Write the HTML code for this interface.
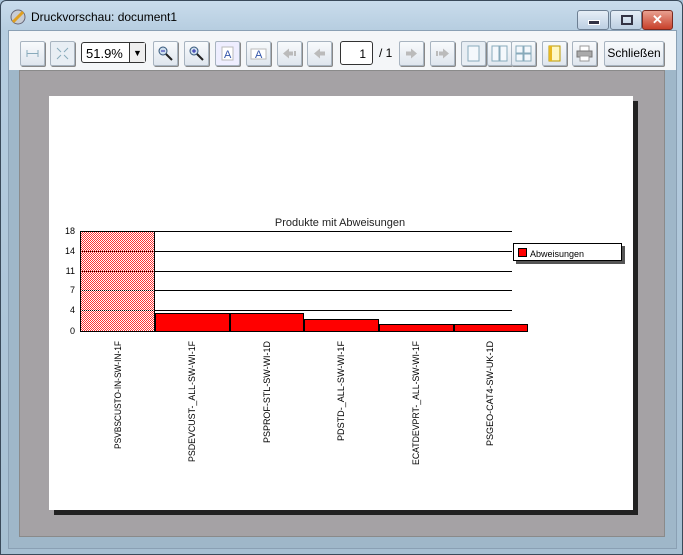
<!DOCTYPE html>
<html><head><style>
body{margin:0;width:683px;height:555px;overflow:hidden;font-family:"Liberation Sans",sans-serif;background:#a9c3d8;position:relative}
.frame{position:absolute;left:0;top:0;width:681px;height:553px;border:1px solid #3a4a5a;border-radius:6px 6px 0 0;background:linear-gradient(#c9dcec,#b6cde0 30px,#a6bfd2);}
.title{position:absolute;left:31px;top:10px;font-size:12px;color:#000}
.client{position:absolute;left:8px;top:30px;width:667px;height:40px;background:#f4f6f8;border:1px solid #8aa0b4;border-bottom:none}
.lower{position:absolute;left:8px;top:70px;width:667px;height:478px;background:#9fb7c9;border:1px solid #8aa0b4;border-top:none}
.gray{position:absolute;left:19px;top:70px;width:644px;height:465px;background:#a5a2a5;border:1px solid #8a8a8a}
.btn{position:absolute;top:41px;height:23px;width:23px;border:1px solid #a8b4c0;background:linear-gradient(#f8fafc,#dfe6ee);border-radius:2px;box-shadow:1px 1px 0 #888}
.btn svg{position:absolute;left:2px;top:2px}
.wb{position:absolute;top:10px;height:18px;border:1px solid #6d7f93;border-radius:3px;background:linear-gradient(#e6eef7,#bccfe2)}
</style></head><body>
<div class="frame"></div>
<svg style="position:absolute;left:9px;top:8px" width="18" height="18"><circle cx="9" cy="9" r="7" fill="#c8ccd4" stroke="#667" /><path d="M4 14 L14 4" stroke="#e0a020" stroke-width="3"/></svg>
<div class="title">Druckvorschau: document1</div>
<div class="wb" style="left:577px;width:30px"><div style="position:absolute;left:10px;top:9px;width:10px;height:3px;background:#334;border:1px solid #fff"></div></div>
<div class="wb" style="left:610px;width:30px"><div style="position:absolute;left:10px;top:4px;width:8px;height:6px;border:2px solid #334"></div></div>
<div class="wb" style="left:642px;width:29px;background:linear-gradient(#e8a090,#c8402a);border-color:#7a2a20;color:#fff;font-weight:bold;font-size:13px;text-align:center;line-height:18px">✕</div>
<div class="client"></div>
<div class="lower"></div>
<div class="btn" style="left:20px"><svg width="19" height="19"><path d="M4 9.5H15M4 6v7M15 6v7" stroke="#8ab" fill="none"/></svg></div>
<div class="btn" style="left:50px;background:#e8eef4"><svg width="19" height="19"><path d="M4 4l4 4M15 4l-4 4M4 15l4-4M15 15l-4-4" stroke="#8ab" fill="none"/></svg></div>
<div style="position:absolute;left:81px;top:42px;width:65px;height:21px;border:1px solid #333;border-radius:3px;background:#fff;font-size:13px;line-height:21px;padding-left:4px;box-sizing:border-box">51.9%<div style="position:absolute;right:0;top:0;width:15px;height:19px;border-left:1px solid #333;background:#eee;font-size:9px;text-align:center">▼</div></div>
<div class="btn" style="left:153px"><svg width="19" height="19"><circle cx="7" cy="7" r="4" fill="#cde" stroke="#357"/><path d="M5 7h4" stroke="#22a"/><path d="M10 10l6 6" stroke="#222" stroke-width="2"/></svg></div>
<div class="btn" style="left:184px"><svg width="19" height="19"><circle cx="7" cy="7" r="4" fill="#cde" stroke="#357"/><path d="M5 7h4M7 5v4" stroke="#22a"/><path d="M10 10l6 6" stroke="#222" stroke-width="2"/></svg></div>
<div class="btn" style="left:215px;background:#eef"><svg width="19" height="19"><rect x="4" y="3" width="11" height="13" fill="#fff" stroke="#bbb"/><text x="6" y="14" font-size="11" fill="#35a">A</text></svg></div>
<div class="btn" style="left:246px"><svg width="19" height="19"><rect x="2" y="5" width="15" height="10" fill="#fff" stroke="#bbb"/><text x="6" y="14" font-size="11" fill="#35a">A</text></svg></div>
<div class="btn" style="left:277px"><svg width="19" height="19"><path d="M3 9.5l6-5v3h4v4H9v3z" fill="#bbb"/><rect x="14" y="7" width="2" height="5" fill="#bbb"/></svg></div>
<div class="btn" style="left:307px"><svg width="19" height="19"><path d="M4 9.5l6-5v3h5v4h-5v3z" fill="#bbb"/></svg></div>
<div style="position:absolute;left:340px;top:41px;width:33px;height:24px;border:1px solid #333;border-radius:3px;background:#fff;font-size:12px;line-height:24px;text-align:right;padding-right:6px;box-sizing:border-box">1</div>
<div style="position:absolute;left:379px;top:46px;font-size:12px">/ 1</div>
<div class="btn" style="left:399px"><svg width="19" height="19"><path d="M15 9.5l-6-5v3H4v4h5v3z" fill="#bbb"/></svg></div>
<div class="btn" style="left:430px"><svg width="19" height="19"><path d="M16 9.5l-6-5v3H6v4h4v3z" fill="#bbb"/><rect x="3" y="7" width="2" height="5" fill="#bbb"/></svg></div>
<div class="btn" style="left:461px;background:#e8eef4"><svg width="19" height="19"><rect x="4" y="2" width="11" height="15" fill="#f4f8fc" stroke="#8ab"/></svg></div>
<div class="btn" style="left:487px"><svg width="19" height="19"><rect x="2" y="2" width="7" height="15" fill="#f4f8fc" stroke="#8ab"/><rect x="10" y="2" width="7" height="15" fill="#f4f8fc" stroke="#8ab"/></svg></div>
<div class="btn" style="left:511px"><svg width="19" height="19"><rect x="2" y="2" width="7" height="7" fill="#f4f8fc" stroke="#8ab"/><rect x="10" y="2" width="7" height="7" fill="#f4f8fc" stroke="#8ab"/><rect x="2" y="10" width="7" height="7" fill="#f4f8fc" stroke="#8ab"/><rect x="10" y="10" width="7" height="7" fill="#f4f8fc" stroke="#8ab"/></svg></div>
<div class="btn" style="left:542px"><svg width="19" height="19"><rect x="4" y="2" width="11" height="15" fill="#fff8c0" stroke="#b90"/><rect x="4" y="2" width="3" height="15" fill="#e8b820"/></svg></div>
<div class="btn" style="left:572px"><svg width="19" height="19"><rect x="5" y="2" width="9" height="5" fill="#fff" stroke="#999"/><rect x="2" y="7" width="15" height="6" fill="#aaa" stroke="#777"/><rect x="5" y="12" width="9" height="5" fill="#fff" stroke="#999"/></svg></div>
<div class="btn" style="left:604px;width:58px;font-size:12px;line-height:23px;text-align:center">Schließen</div>
<div class="gray"></div>
<div style="position:absolute;left:54px;top:101px;width:584px;height:414px;background:#222"></div>
<div style="position:absolute;left:49px;top:96px;width:584px;height:414px;background:#fff"></div>
<svg style="position:absolute;left:0;top:0" width="683" height="555" font-family="Liberation Sans" >
<defs><pattern id="ch" width="2" height="2" patternUnits="userSpaceOnUse"><rect width="2" height="2" fill="#fff"/><rect width="1" height="1" fill="#f33"/><rect x="1" y="1" width="1" height="1" fill="#f33"/></pattern></defs>
<text x="340" y="226" font-size="11" text-anchor="middle" fill="#222">Produkte mit Abweisungen</text>
<g stroke="#000" stroke-width="1">
<rect x="80.5" y="231.5" width="74" height="100" fill="url(#ch)"/>
<line x1="80" y1="231.5" x2="512" y2="231.5"/>
<g stroke-dasharray="1,1"><line x1="80" y1="251.5" x2="155" y2="251.5"/><line x1="80" y1="271.5" x2="155" y2="271.5"/><line x1="80" y1="290.5" x2="155" y2="290.5"/><line x1="80" y1="310.5" x2="155" y2="310.5"/></g>
<line x1="155" y1="251.5" x2="512" y2="251.5"/><line x1="155" y1="271.5" x2="512" y2="271.5"/><line x1="155" y1="290.5" x2="512" y2="290.5"/><line x1="155" y1="310.5" x2="512" y2="310.5"/>
<rect x="155.5" y="313.5" width="74" height="18" fill="#f00"/>
<rect x="230.5" y="313.5" width="73" height="18" fill="#f00"/>
<rect x="304.5" y="319.5" width="74" height="12" fill="#f00"/>
<rect x="379.5" y="324.5" width="74" height="7" fill="#f00"/>
<rect x="454.5" y="324.5" width="73" height="7" fill="#f00"/>
</g>
<g font-size="9" text-anchor="end" fill="#000">
<text x="75" y="234">18</text><text x="75" y="254">14</text><text x="75" y="274">11</text><text x="75" y="293">7</text><text x="75" y="313">4</text><text x="75" y="334">0</text>
</g>
<rect x="516" y="246" width="109" height="18" fill="#555"/>
<rect x="513.5" y="243.5" width="108" height="17" fill="#fff" stroke="#000"/>
<rect x="518.5" y="248.5" width="8" height="8" fill="#f00" stroke="#000"/>
<text x="530" y="257" font-size="9">Abweisungen</text>
<g font-size="9" text-anchor="end" fill="#000">
<text transform="translate(121,341) rotate(-90)" textLength="108" lengthAdjust="spacingAndGlyphs">PSVBSCUSTO-IN-SW-IN-1F</text>
<text transform="translate(195,341) rotate(-90)" textLength="121" lengthAdjust="spacingAndGlyphs">PSDEVCUST-_ALL-SW-WI-1F</text>
<text transform="translate(270,341) rotate(-90)" textLength="102" lengthAdjust="spacingAndGlyphs">PSPROF-STL-SW-WI-1D</text>
<text transform="translate(344,341) rotate(-90)" textLength="100" lengthAdjust="spacingAndGlyphs">PDSTD-_ALL-SW-WI-1F</text>
<text transform="translate(419,341) rotate(-90)" textLength="124" lengthAdjust="spacingAndGlyphs">ECATDEVPRT-_ALL-SW-WI-1F</text>
<text transform="translate(493,341) rotate(-90)" textLength="105" lengthAdjust="spacingAndGlyphs">PSGEO-CAT4-SW-UK-1D</text>
</g>
</svg>
</body></html>
